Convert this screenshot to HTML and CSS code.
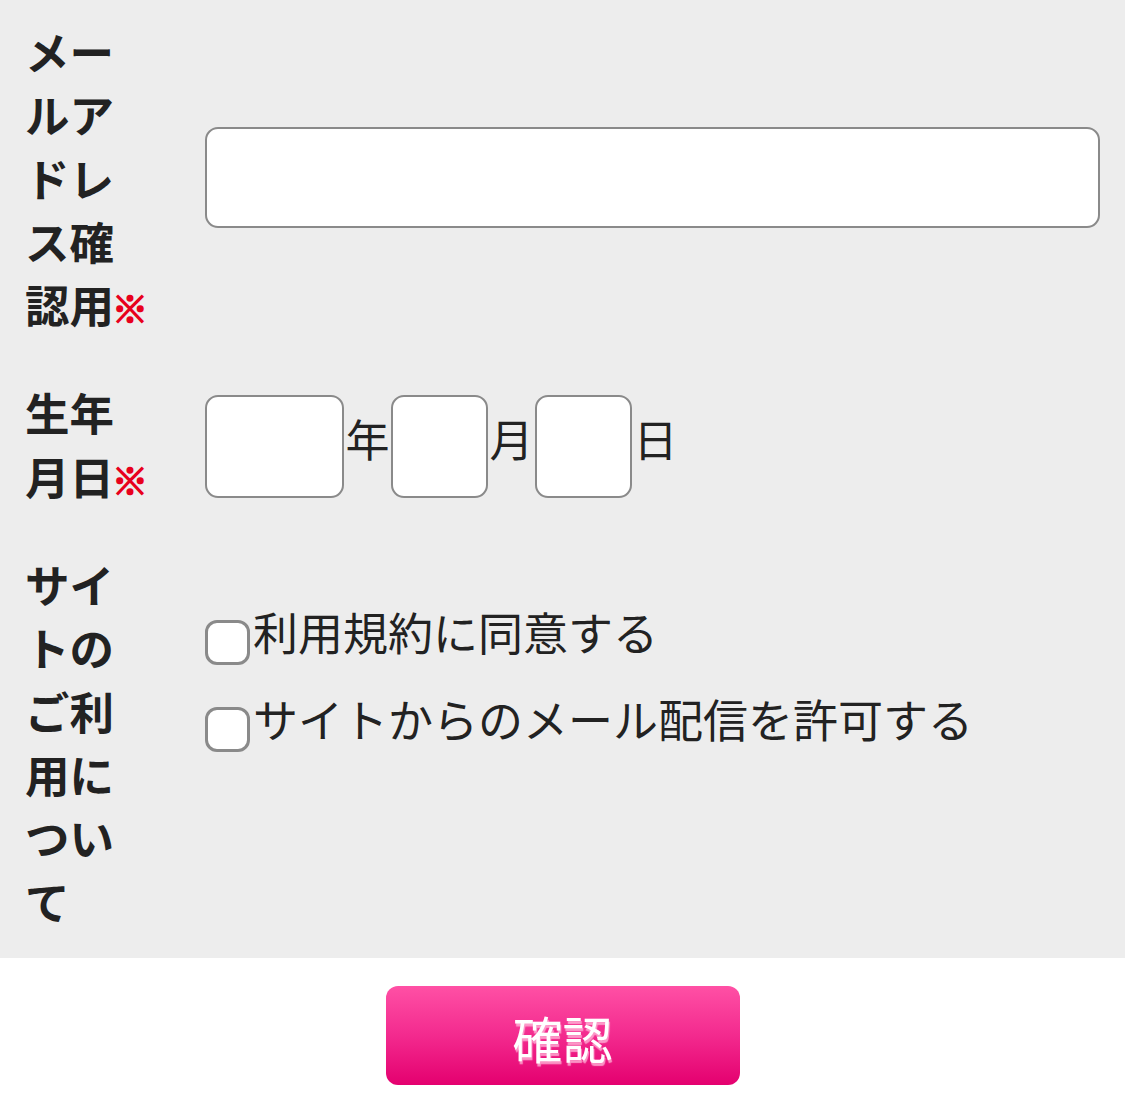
FILE: index.html
```html
<!DOCTYPE html>
<html lang="ja">
<head>
<meta charset="utf-8">
<title>フォーム</title>
<link rel="stylesheet" href="styles.css">
</head>
<body>
<form class="form">
  <div class="rows">
    <div class="row">
      <div class="label">メールアドレス確認用<span class="req">※</span></div>
      <div class="field"><input class="text wide" type="text"></div>
    </div>
    <div class="row">
      <div class="label">生年月日<span class="req">※</span></div>
      <div class="field date">
        <input class="text year" type="text"><span class="unit">年</span>
        <input class="text md" type="text"><span class="unit">月</span>
        <input class="text md" type="text"><span class="unit">日</span>
      </div>
    </div>
    <div class="row">
      <div class="label">サイトのご利用について</div>
      <div class="field options">
        <label class="opt"><input class="check" type="checkbox"><span class="opt-text">利用規約に同意する</span></label>
        <label class="opt"><input class="check" type="checkbox"><span class="opt-text">サイトからのメール配信を許可する</span></label>
      </div>
    </div>
  </div>
  <div class="actions">
    <button class="submit" type="button">確認</button>
  </div>
</form>
</body>
</html>
```

FILE: styles.css
```css
* { box-sizing: border-box; }

html, body {
  margin: 0;
  padding: 0;
  background: #ffffff;
}

body {
  font-family: "Noto Sans CJK JP", "Noto Sans", sans-serif;
  color: #222222;
}

.form {
  margin: 0;
}

.rows {
  background: #ededed;
  padding: 0 25px;
}

.row {
  display: grid;
  grid-template-columns: 180px 1fr;
  align-items: center;
  padding: 19px 0 26px;
}

.label {
  max-width: 130px;
  font-size: 44.5px;
  line-height: 63.3px;
  font-weight: 700;
  color: #222222;
}

.req {
  color: #e8001c;
  font-size: 36px;
  line-height: 1;
  font-weight: 900;
  margin-left: -2px;
  -webkit-text-stroke: 1.6px #e8001c;
}

.field {
  min-width: 0;
}

.text {
  display: block;
  margin: 0;
  height: 103px;
  background: #ffffff;
  border: 2.5px solid #8a8a8a;
  border-radius: 13px;
  font: inherit;
  outline: none;
}

.wide {
  width: 100%;
  height: 101px;
}

.date {
  display: flex;
  align-items: center;
  gap: 1.5px;
  margin-top: 5px;
}

.year { width: 139px; }
.md { width: 97px; }

.unit {
  font-size: 44px;
  line-height: 63px;
  width: 44px;
  margin-top: -16px;
  color: #222222;
}

.options {
  align-self: start;
  padding-top: 48px;
  display: flex;
  flex-direction: column;
  gap: 22px;
}

.opt {
  display: flex;
  align-items: flex-start;
  gap: 3px;
}

.check {
  appearance: none;
  -webkit-appearance: none;
  flex: none;
  width: 45px;
  height: 45px;
  margin: 20px 0 0;
  background: #ffffff;
  border: 3.5px solid #8a8a8a;
  border-radius: 12px;
}

.opt-text {
  font-size: 45px;
  line-height: 63px;
  color: #222222;
}

.actions {
  display: flex;
  justify-content: center;
  padding: 28px 0 20px;
}

.submit {
  width: 354px;
  height: 99px;
  border: none;
  border-radius: 12px;
  background: linear-gradient(to bottom, #ff50a5 0%, #f32a8e 50%, #e4006f 100%);
  color: #ffffff;
  font-family: "Noto Sans CJK JP", "Noto Sans", sans-serif;
  font-size: 50px;
  line-height: 103px;
  padding: 0;
  text-shadow: 1px 3px 1px rgba(255, 190, 220, 0.75);
}
```
